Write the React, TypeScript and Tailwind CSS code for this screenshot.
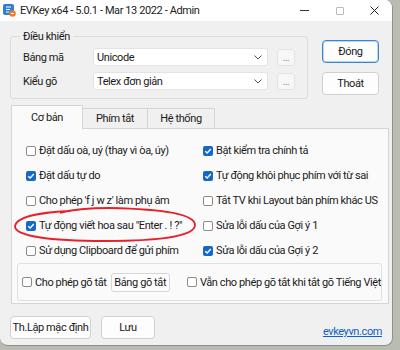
import React from 'react';

const font = "font-['Roboto','Noto_Sans',sans-serif]";

function Check({ checked }: { checked?: boolean }) {
  if (checked) {
    return (
      <span className="flex h-[10px] w-[10px] shrink-0 items-center justify-center rounded-[2px] bg-[#1568c8]">
        <svg width="8" height="8" viewBox="0 0 10 10">
          <path d="M1.5 5.2 L4 7.5 L8.5 2.5" fill="none" stroke="#fff" strokeWidth="1.7" />
        </svg>
      </span>
    );
  }
  return <span className="block h-[10px] w-[10px] shrink-0 rounded-[2px] border border-[#8a8a8a] bg-white" />;
}

function Option({ label, checked }: { label: string; checked?: boolean }) {
  return (
    <div className="flex h-[25px] items-center gap-[3px] whitespace-nowrap">
      <Check checked={checked} />
      <span>{label}</span>
    </div>
  );
}

function Combo({ value }: { value: string }) {
  return (
    <div className="flex items-center gap-[9px]">
      <div className="flex h-[18px] w-[175px] items-center justify-between rounded-[3px] border border-[#e3e3e3] bg-white pl-[3px] pr-[5px]">
        <span>{value}</span>
        <svg width="8" height="5" viewBox="0 0 8 5">
          <path d="M0.5 0.5 L4 4 L7.5 0.5" fill="none" stroke="#555" strokeWidth="1" />
        </svg>
      </div>
      <div className="flex h-[17px] w-[18px] items-center justify-center rounded-[3px] border border-[#e3e3e3] bg-[#f7f7f7] text-[10px] text-[#888]">
        ...
      </div>
    </div>
  );
}

function WinButton({ children, primary, className = '' }: { children: React.ReactNode; primary?: boolean; className?: string }) {
  return (
    <div
      className={`flex h-[23px] items-center justify-center whitespace-nowrap rounded-[4px] border bg-[#fdfdfd] ${
        primary ? 'border-[#3a84d4] shadow-[inset_0_0_0_1px_#bcd6f2]' : 'border-[#d0d0d0]'
      } ${className}`}
    >
      {children}
    </div>
  );
}

export default function App() {
  const left = [
    { label: 'Đặt dấu oà, uý (thay vì òa, úy)' },
    { label: 'Đặt dấu tự do', checked: true },
    { label: "Cho phép 'f j w z' làm phụ âm" },
    { label: 'Tự động viết hoa sau "Enter . ! ?"', checked: true },
    { label: 'Sử dụng Clipboard để gửi phím' },
  ];
  const right = [
    { label: 'Bật kiểm tra chính tả', checked: true },
    { label: 'Tự động khôi phục phím với từ sai', checked: true },
    { label: 'Tắt TV khi Layout bàn phím khác US' },
    { label: 'Sửa lỗi dấu của Gợi ý 1' },
    { label: 'Sửa lỗi dấu của Gợi ý 2', checked: true },
  ];

  return (
    <div className={`relative h-[350px] w-[400px] overflow-hidden bg-[#b8bcb2] text-[11px] leading-[15px] tracking-[-0.4px] text-[#1a1a1a] ${font}`}>
      <div className="flex h-[346px] w-[393px] flex-col overflow-hidden rounded-r-[8px] rounded-bl-[8px] border-r border-b border-[#8f8f8f] bg-[#f0f0f0]">
        {/* title bar */}
        <div className="flex h-[21px] shrink-0 items-center bg-white">
          <svg className="ml-[3px]" width="13" height="13" viewBox="0 0 13 13">
            <rect x="0" y="0" width="11" height="11" rx="2" fill="#2f7fd0" />
            <path d="M3 3 H8 M3 5.5 H7 M3 8 H6" stroke="#fff" strokeWidth="1.2" />
            <circle cx="9.5" cy="9.5" r="3.3" fill="#ef7d30" />
            <path d="M8 9.5 H11" stroke="#fff" strokeWidth="1" />
          </svg>
          <span className="ml-[4px] text-[#222]">EVKey x64 - 5.0.1 - Mar 13 2022 - Admin</span>
          <div className="ml-auto flex h-full items-center">
            <div className="flex w-[35px] justify-center">
              <span className="h-[1px] w-[9px] bg-[#333]" />
            </div>
            <div className="flex w-[35px] justify-center">
              <span className="h-[8px] w-[8px] rounded-[1px] border border-[#bbb]" />
            </div>
            <div className="flex w-[35px] justify-center">
              <svg width="9" height="9" viewBox="0 0 9 9">
                <path d="M0.5 0.5 L8.5 8.5 M8.5 0.5 L0.5 8.5" stroke="#222" strokeWidth="1" />
              </svg>
            </div>
          </div>
        </div>

        {/* top section */}
        <div className="flex pl-[10px] pt-[8px]">
          <fieldset className="h-[70px] w-[295px] rounded-[3px] border border-[#dcdcdc] px-[12px] pt-[4px]">
            <legend className="ml-[-3px] px-[3px]">Điều khiển</legend>
            <div className="flex flex-col gap-[6px]">
              <div className="flex items-center">
                <span className="w-[70px]">Bảng mã</span>
                <Combo value="Unicode" />
              </div>
              <div className="flex items-center">
                <span className="w-[70px]">Kiểu gõ</span>
                <Combo value="Telex đơn giản" />
              </div>
            </div>
          </fieldset>
          <div className="ml-[14px] mt-[11px] flex flex-col gap-[9px]">
            <WinButton primary className="w-[57px]">Đóng</WinButton>
            <WinButton className="w-[57px]">Thoát</WinButton>
          </div>
        </div>

        {/* tabs */}
        <div className="ml-[11px] mt-[6px] flex h-[23px] items-end">
          <div className="relative z-10 mb-[-1px] flex h-[24px] w-[72px] items-center justify-center border border-b-0 border-[#d5d5d5] bg-[#fafafa]">
            Cơ bản
          </div>
          <div className="flex h-[20px] w-[65px] items-center justify-center border border-l-0 border-b-0 border-[#d5d5d5] bg-[#f0f0f0]">
            Phím tắt
          </div>
          <div className="flex h-[20px] w-[67px] items-center justify-center border border-l-0 border-b-0 border-[#d5d5d5] bg-[#f0f0f0]">
            Hệ thống
          </div>
        </div>
        <div className="ml-[11px] h-[176px] w-[378px] border border-[#d5d5d5] bg-[#fafafa] pl-[5px] pt-[9px]">
          <div className="flex">
            <div className="ml-[9px] flex w-[177px] flex-col">
              {left.map((o) => (
                <Option key={o.label} {...o} />
              ))}
            </div>
            <div className="flex flex-col">
              {right.map((o) => (
                <Option key={o.label} {...o} />
              ))}
            </div>
          </div>
          <div className="flex h-[38px] w-[365px] items-center whitespace-nowrap rounded-[3px] border border-[#e0e0e0] pl-[4px]">
            <Check />
            <span className="ml-[3px]">Cho phép gõ tắt</span>
            <div className="ml-[4px] flex h-[19px] w-[63px] items-center justify-center rounded-[3px] border border-[#d6d6d6] bg-[#fdfdfd]">
              Bảng gõ tắt
            </div>
            <div className="ml-[17px]">
              <Check />
            </div>
            <span className="ml-[3px]">Vẫn cho phép gõ tắt khi tắt gõ Tiếng Việt</span>
          </div>
        </div>

        {/* bottom */}
        <div className="mt-[12px] flex items-center pl-[10px] pr-[10px]">
          <WinButton className="w-[81px]">Th.Lập mặc định</WinButton>
          <WinButton className="ml-[10px] w-[54px]">Lưu</WinButton>
          <span className="ml-auto mt-[8px] text-[#0b62c4] underline">evkeyvn.com</span>
        </div>
      </div>

      {/* hand-drawn annotation */}
      <svg className="pointer-events-none absolute left-0 top-0" width="400" height="350">
        <path
          d="M70 211 C45 212 17 216 15 226 C14 236 50 241 105 241 C160 241 195 236 195 225 C195 214 160 209 110 208 C90 208 74 209 60 213"
          fill="none"
          stroke="#e8202a"
          strokeWidth="1.8"
        />
      </svg>
    </div>
  );
}
